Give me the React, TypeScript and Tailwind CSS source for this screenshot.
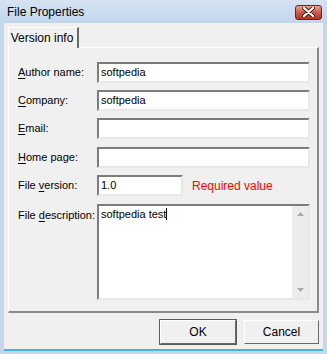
import React from 'react';

// Classic Win32 "File Properties" dialog

const sunken =
  'border-2 border-t-[#7c7c7c] border-l-[#7c7c7c] border-b-[#e8e8e8] border-r-[#e8e8e8] bg-white';

interface FieldProps {
  label: React.ReactNode;
  value?: string;
  width?: string;
  mt: string;
  extra?: React.ReactNode;
}

const Field: React.FC<FieldProps> = ({ label, value = '', width = 'w-[213px]', mt, extra }) => (
  <div className={`flex items-center ${mt}`}>
    <div className="w-[79px] pl-[9px] box-content text-[#000]">{label}</div>
    <div className={`${sunken} ${width} h-[21px] flex items-center pl-[2px] leading-none`}>{value}</div>
    {extra}
  </div>
);

const u = (ch: string) => <span className="underline underline-offset-[2px]">{ch}</span>;

const WinButton: React.FC<{ label: string; w: string; isDefault?: boolean }> = ({ label, w, isDefault }) => (
  <div
    className={`${w} h-[24px] flex items-center justify-center bg-[#f0f0f0] border border-t-white border-l-white border-b-[#696969] border-r-[#696969] ${
      isDefault ? 'outline outline-1 outline-[#5a5a5a]' : ''
    }`}
  >
    <span className="text-[12px]">{label}</span>
  </div>
);

export default function App() {
  return (
    <div className="w-[327px] h-[354px] bg-[#c4d7eb] flex flex-col font-['Liberation_Sans',Arial,sans-serif] text-[11px] text-black overflow-hidden">
      {/* Title bar */}
      <div className="h-[23px] flex items-center justify-between pl-[7px] pr-[5px] bg-gradient-to-b from-[#d5e3f2] to-[#c2d6ec]">
        <span className="text-[12px] font-normal text-black">File Properties</span>
        <div className="w-[27px] h-[15px] mt-[1px] rounded-[3px] border border-[#5b2a28] bg-gradient-to-b from-[#e7a295] via-[#cd5a48] to-[#b7321e] flex items-center justify-center">
          <svg width="13" height="10" viewBox="0 0 13 10">
            <path d="M2 1 L11 9 M11 1 L2 9" stroke="#4a1a14" strokeWidth="4" strokeLinecap="round" />
            <path d="M2 1 L11 9 M11 1 L2 9" stroke="#ffffff" strokeWidth="2.2" strokeLinecap="round" />
          </svg>
        </div>
      </div>

      {/* Client area */}
      <div className="flex-1 mx-[4px] mb-[3px] bg-[#f0f0f0] flex flex-col border-b-2 border-[#45b4e0]">
        {/* Tab strip */}
        <div className="pt-[3px] pl-[4px] pr-[4px]">
          <div className="w-[71px] h-[21px] flex items-center justify-center border-t border-l border-white border-r-2 border-r-[#696969] relative top-[1px] bg-[#f0f0f0] z-10">
            <span className="text-[12px] pr-[2px]">Version info</span>
          </div>
        </div>

        {/* Tab panel */}
        <div className="mx-[4px] h-[266px] border-t border-l border-white border-r-2 border-b-2 border-r-[#8a8a8a] border-b-[#8a8a8a] flex flex-col">
          <Field mt="mt-[14px]" label={<>{u('A')}uthor name:</>} value="softpedia" />
          <Field mt="mt-[7px]" label={<>{u('C')}ompany:</>} value="softpedia" />
          <Field mt="mt-[7px]" label={<>{u('E')}mail:</>} />
          <Field mt="mt-[8px]" label={<>{u('H')}ome page:</>} />
          <Field
            mt="mt-[7px]"
            label={<>File {u('v')}ersion:</>}
            value="1.0"
            width="w-[86px]"
            extra={<span className="ml-[9px] text-[12px] text-[#ff0000]">Required value</span>}
          />
          <div className="flex items-start mt-[8px]">
            <div className="w-[79px] pl-[9px] box-content pt-[3px]">File {u('d')}escription:</div>
            <div className={`${sunken} w-[213px] h-[96px] flex`}>
              <div className="flex-1 pl-[2px] pt-[3px] leading-none">
                softpedia test<span className="inline-block w-[1px] h-[12px] bg-black align-middle -mt-[2px]" />
              </div>
              <div className="w-[16px] bg-[#ececec] flex flex-col justify-between items-center py-[6px]">
                <svg width="7" height="4" viewBox="0 0 7 4">
                  <path d="M0 4 L3.5 0 L7 4 Z" fill="#a8a8a8" />
                </svg>
                <svg width="7" height="4" viewBox="0 0 7 4">
                  <path d="M0 0 L3.5 4 L7 0 Z" fill="#a8a8a8" />
                </svg>
              </div>
            </div>
          </div>
        </div>

        {/* Buttons */}
        <div className="flex justify-end gap-[8px] pr-[4px] mt-[7px]">
          <WinButton label="OK" w="w-[76px]" isDefault />
          <WinButton label="Cancel" w="w-[75px]" />
        </div>
      </div>
    </div>
  );
}
